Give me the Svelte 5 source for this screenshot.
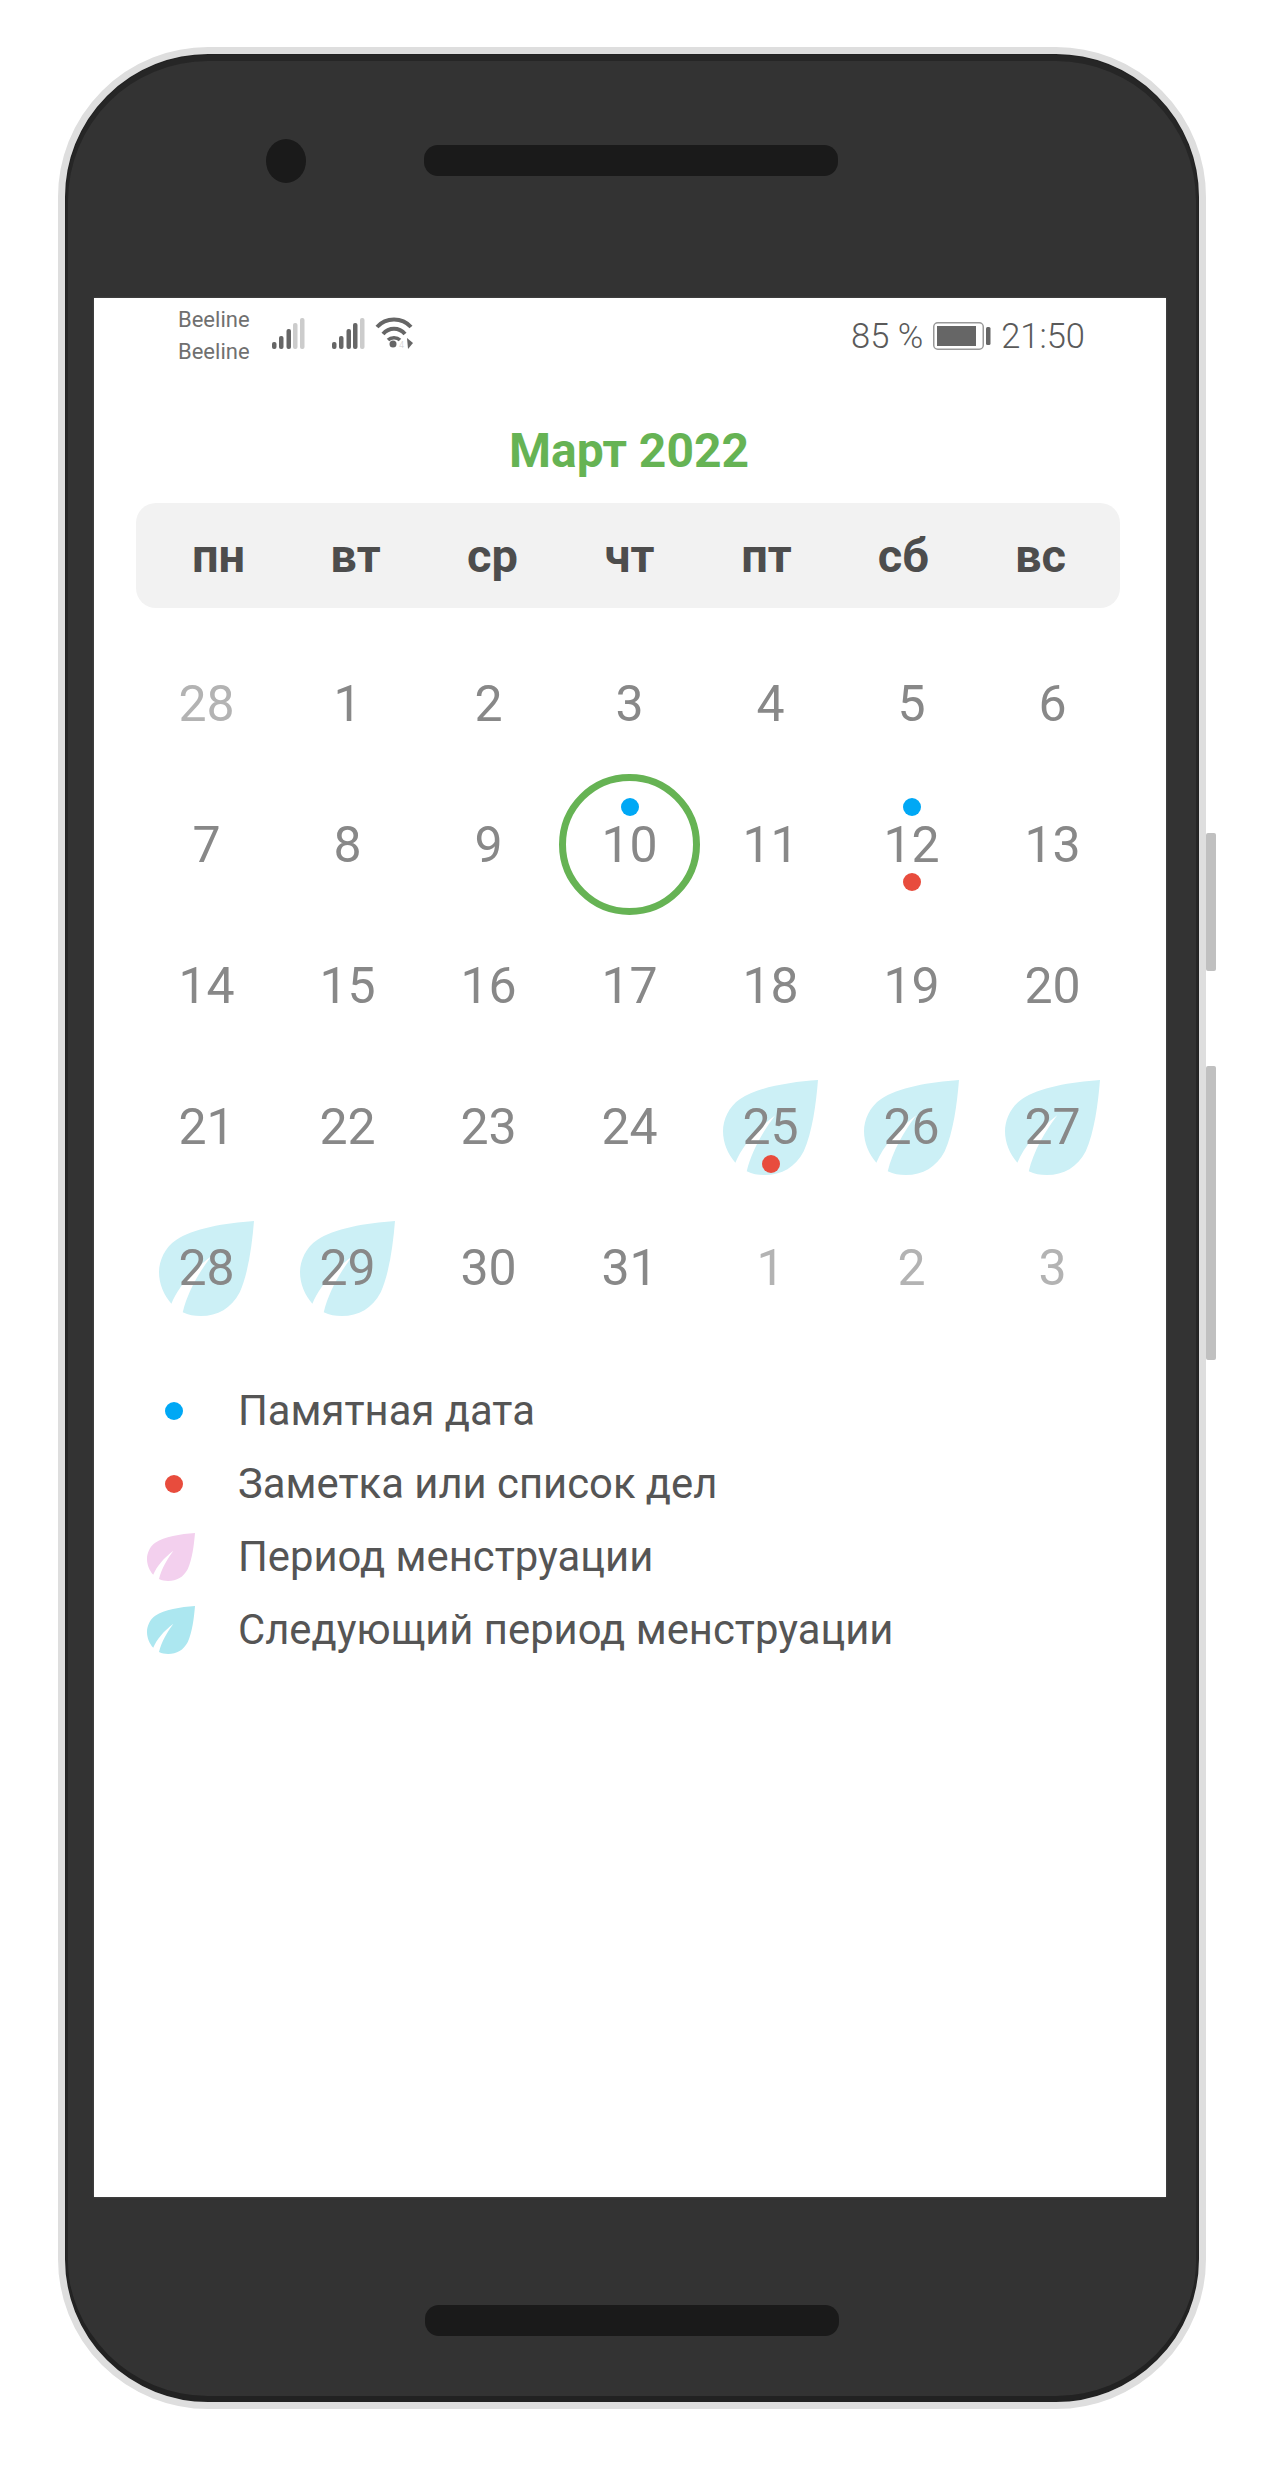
<script>
  const weekdays = ["пн", "вт", "ср", "чт", "пт", "сб", "вс"];

  // blue = памятная дата, red = заметка, leaf = следующий период
  const days = [
    { n: 28, muted: true }, { n: 1 }, { n: 2 }, { n: 3 }, { n: 4 }, { n: 5 }, { n: 6 },
    { n: 7 }, { n: 8 }, { n: 9 }, { n: 10, today: true, blue: true }, { n: 11 }, { n: 12, blue: true, red: true }, { n: 13 },
    { n: 14 }, { n: 15 }, { n: 16 }, { n: 17 }, { n: 18 }, { n: 19 }, { n: 20 },
    { n: 21 }, { n: 22 }, { n: 23 }, { n: 24 }, { n: 25, leaf: true, red: true }, { n: 26, leaf: true }, { n: 27, leaf: true },
    { n: 28, leaf: true }, { n: 29, leaf: true }, { n: 30 }, { n: 31 }, { n: 1, muted: true }, { n: 2, muted: true }, { n: 3, muted: true }
  ];

  const legend = [
    { kind: "blue", label: "Памятная дата" },
    { kind: "red", label: "Заметка или список дел" },
    { kind: "pink", label: "Период менструации" },
    { kind: "cyan", label: "Следующий период менструации" }
  ];

  const leafPath = "M100 0C70 2 35 8 18 20C6 28 0 42 0 54C0 66 5 78 13 87C20 70 35 52 55 37C42 54 30 75 25 96C31 99 37 100 44 100C62 100 76 92 85 75C94 55 98 25 100 0Z";
  const bars = [
    { x: 0, h: 7 }, { x: 7, h: 13 }, { x: 14.5, h: 20 }, { x: 21, h: 26 }, { x: 28, h: 31 }
  ];
</script>

<div class="page">
  <div class="phone">
    <div class="side-btn btn-top"></div>
    <div class="side-btn btn-bottom"></div>

    <div class="bezel-top">
      <div class="camera"></div>
      <div class="speaker"></div>
    </div>

    <div class="screen">
      <div class="status">
        <div class="status-left">
          <div class="carriers">
            <span>Beeline</span>
            <span>Beeline</span>
          </div>
          <svg class="signal" width="33" height="32" viewBox="0 0 33 32">
            {#each bars as b, i}
              <rect x={b.x} y={32 - b.h} width="4.5" height={b.h} rx="2" fill={i < 3 ? "#666" : "#ccc"} />
            {/each}
          </svg>
          <svg class="signal signal-2" width="33" height="32" viewBox="0 0 33 32">
            {#each bars as b, i}
              <rect x={b.x} y={32 - b.h} width="4.5" height={b.h} rx="2" fill={i < 4 ? "#666" : "#ccc"} />
            {/each}
          </svg>
          <svg class="wifi" width="38" height="32" viewBox="0 0 38 32">
            <path d="M2 10C11 0 27 0 36 10" fill="none" stroke="#666" stroke-width="4" />
            <path d="M8 17C14 10 24 10 30 17" fill="none" stroke="#666" stroke-width="4" />
            <path d="M13 23C16 20 22 20 25 23" fill="none" stroke="#666" stroke-width="3.5" />
            <circle cx="18" cy="27" r="3.5" fill="#666" />
            <text x="24" y="31" font-size="9" fill="#ccc" font-family="Roboto, sans-serif">4</text>
            <path d="M32 21L38 26L33 32Z" fill="#666" />
          </svg>
        </div>
        <div class="status-right">
          <span>85 %</span>
          <svg class="battery" width="58" height="28" viewBox="0 0 58 28">
            <rect x="0.75" y="0.75" width="49.5" height="26.5" rx="4" fill="none" stroke="#999" stroke-width="1.5" />
            <rect x="4" y="4" width="39" height="20" fill="#666" />
            <rect x="53" y="5" width="4.5" height="18" rx="1.5" fill="#666" />
          </svg>
          <span>21:50</span>
        </div>
      </div>

      <h1 class="title">Март 2022</h1>

      <div class="weekbar">
        {#each weekdays as w}
          <div class="weekday">{w}</div>
        {/each}
      </div>

      <div class="grid">
        {#each days as d}
          <div class="cell" class:muted={d.muted} class:today={d.today}>
            {#if d.leaf}
              <svg class="leaf" viewBox="0 0 100 100"><path d={leafPath} fill="#ccf0f6" /></svg>
            {/if}
            <span class="num">{d.n}</span>
            {#if d.blue}<i class="dot blue dot-top"></i>{/if}
            {#if d.red}<i class="dot red dot-bottom"></i>{/if}
          </div>
        {/each}
      </div>

      <div class="legend">
        {#each legend as item}
          <div class="legend-row">
            <div class="legend-mark">
              {#if item.kind === "blue" || item.kind === "red"}
                <i class="dot {item.kind}"></i>
              {:else}
                <svg width="48" height="48" viewBox="0 0 100 100">
                  <path d={leafPath} fill={item.kind === "pink" ? "#f3d0ee" : "#ace7f0"} />
                </svg>
              {/if}
            </div>
            <span class="legend-label">{item.label}</span>
          </div>
        {/each}
      </div>
    </div>

    <div class="bezel-bottom">
      <div class="speaker"></div>
    </div>
  </div>
</div>

<style>
  :global(body) {
    margin: 0;
    background: #fff;
  }

  .page {
    width: 1267px;
    height: 2466px;
    padding: 47px 0 0 58px;
    box-sizing: border-box;
    font-family: Roboto, "Noto Sans", sans-serif;
  }

  .phone {
    position: relative;
    width: 1148px;
    height: 2362px;
    box-sizing: border-box;
    border: 7px solid #dedede;
    border-radius: 150px;
    background: #333;
    box-shadow: inset 0 0 0 1px #222, inset 0 4px 0 3px #262626, inset 0 -4px 0 2px #222;
    display: flex;
    flex-direction: column;
    align-items: center;
  }

  .side-btn {
    position: absolute;
    right: -17px;
    width: 10px;
    background: #c0c0c0;
    border-radius: 2px;
  }

  .btn-top {
    top: 779px;
    height: 138px;
  }

  .btn-bottom {
    top: 1012px;
    height: 294px;
  }

  .bezel-top {
    width: 100%;
    height: 244px;
    box-sizing: border-box;
    padding: 0 0 30px 201px;
    display: flex;
    align-items: center;
    flex-shrink: 0;
  }

  .camera {
    width: 40px;
    height: 44px;
    border-radius: 50%;
    background: #1a1a1a;
    margin-right: 118px;
  }

  .speaker {
    width: 414px;
    height: 31px;
    border-radius: 14px;
    background: #1a1a1a;
  }

  .bezel-top .speaker {
    margin-top: -2px;
  }

  .bezel-bottom {
    width: 100%;
    height: 205px;
    box-sizing: border-box;
    padding-top: 42px;
    display: flex;
    align-items: center;
    justify-content: center;
    flex-shrink: 0;
  }

  .screen {
    width: 1072px;
    flex: 1;
    margin-right: 4px;
    background: #fff;
    box-shadow: 0 0 2px #555;
  }

  .status {
    display: flex;
    justify-content: space-between;
    padding: 6px 81px 0 84px;
    color: #5a5a5a;
    font-weight: 300;
  }

  .status-left {
    display: flex;
    align-items: flex-start;
  }

  .carriers {
    display: flex;
    flex-direction: column;
    font-size: 22px;
    line-height: 32px;
    font-weight: 400;
    color: #707070;
    width: 94px;
  }

  .signal {
    margin-top: 13px;
  }

  .signal-2 {
    margin-left: 27px;
  }

  .wifi {
    margin: 13px 0 0 10px;
  }

  .status-right {
    display: flex;
    align-items: center;
    font-size: 34.5px;
    line-height: 44px;
    margin-top: 10px;
    height: 44px;
  }

  .battery {
    margin: 0 10px;
  }

  .title {
    margin: 0;
    padding: 54px 2px 0 0;
    font-size: 48px;
    line-height: 58px;
    font-weight: 700;
    color: #66b354;
    text-align: center;
  }

  .weekbar {
    margin: 23px 46px 0 42px;
    height: 105px;
    padding: 0 11px 0 14px;
    display: grid;
    grid-template-columns: repeat(7, 1fr);
    align-items: center;
    background: #f2f2f2;
    border-radius: 20px;
  }

  .weekday {
    text-align: center;
    font-size: 47px;
    font-weight: 700;
    color: #4d4d4d;
  }

  .grid {
    margin-top: 25px;
    padding: 0 43px 0 42px;
    display: grid;
    grid-template-columns: repeat(7, 141px);
    grid-auto-rows: 141px;
  }

  .cell {
    position: relative;
    display: flex;
    align-items: center;
    justify-content: center;
    font-size: 50px;
    color: #888;
  }

  .cell.muted {
    color: #b3b3b3;
  }

  .cell.today::before {
    content: "";
    position: absolute;
    inset: 0;
    border: 7px solid #66b354;
    border-radius: 50%;
  }

  .num {
    position: relative;
  }

  .leaf {
    position: absolute;
    left: 23px;
    top: 24px;
    width: 95px;
    height: 95px;
  }

  .dot {
    display: block;
    width: 18px;
    height: 18px;
    border-radius: 50%;
  }

  .cell .dot {
    position: absolute;
    left: 50%;
    margin-left: -9px;
  }

  .dot-top {
    top: 24px;
  }

  .dot-bottom {
    top: 99px;
  }

  .blue {
    background: #00a8f5;
  }

  .red {
    background: #e84c3d;
  }

  .legend {
    margin-top: 36px;
    padding-left: 53px;
  }

  .legend-row {
    display: flex;
    align-items: center;
    height: 73px;
  }

  .legend-mark {
    width: 91px;
    display: flex;
    align-items: center;
  }

  .legend-mark .dot {
    margin-left: 18px;
  }

  .legend-label {
    font-size: 41.8px;
    color: #555;
  }
</style>
